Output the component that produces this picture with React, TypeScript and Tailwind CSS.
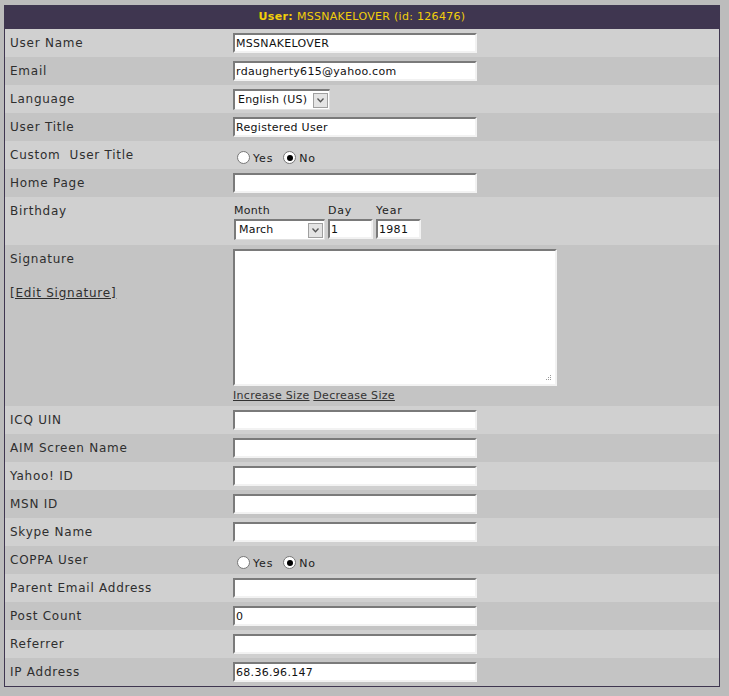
import React from 'react';

const font = { fontFamily: '"DejaVu Sans", Verdana, sans-serif' };

type Row = {
  label: string;
  kind: 'text' | 'select' | 'radio' | 'birthday' | 'signature';
  value?: string;
};

const rows: Row[] = [
  { label: 'User Name', kind: 'text', value: 'MSSNAKELOVER' },
  { label: 'Email', kind: 'text', value: 'rdaugherty615@yahoo.com' },
  { label: 'Language', kind: 'select', value: 'English (US)' },
  { label: 'User Title', kind: 'text', value: 'Registered User' },
  { label: 'Custom  User Title', kind: 'radio' },
  { label: 'Home Page', kind: 'text', value: '' },
  { label: 'Birthday', kind: 'birthday' },
  { label: 'Signature', kind: 'signature' },
  { label: 'ICQ UIN', kind: 'text', value: '' },
  { label: 'AIM Screen Name', kind: 'text', value: '' },
  { label: 'Yahoo! ID', kind: 'text', value: '' },
  { label: 'MSN ID', kind: 'text', value: '' },
  { label: 'Skype Name', kind: 'text', value: '' },
  { label: 'COPPA User', kind: 'radio' },
  { label: 'Parent Email Address', kind: 'text', value: '' },
  { label: 'Post Count', kind: 'text', value: '0' },
  { label: 'Referrer', kind: 'text', value: '' },
  { label: 'IP Address', kind: 'text', value: '68.36.96.147' },
];

// Old-style inset text box
const TextBox = ({ value, w }: { value: string; w: string }) => (
  <div
    className={`${w} h-[20px] bg-white border-t-2 border-l-2 border-t-[#7a7a7a] border-l-[#7a7a7a] border-b-2 border-r-2 border-b-[#f2f2f2] border-r-[#f2f2f2] flex items-center pl-[1px] pt-[1px] text-[11px] text-[#111] tracking-[0.3px] leading-none overflow-hidden whitespace-nowrap`}
  >
    {value}
  </div>
);

const Arrow = () => (
  <div className="w-[15px] h-[15px] bg-[#e4e4e4] border border-[#a0a0a0] flex items-center justify-center mr-[1px]">
    <svg width="7" height="5" viewBox="0 0 7 5">
      <path d="M0.5 0.5 L3.5 3.8 L6.5 0.5" fill="none" stroke="#555" strokeWidth="1.3" />
    </svg>
  </div>
);

const SelectBox = ({ value, w }: { value: string; w: string }) => (
  <div
    className={`${w} h-[21px] bg-white border-t-2 border-l-2 border-t-[#7a7a7a] border-l-[#7a7a7a] border-b border-r border-b-[#e0e0e0] border-r-[#e0e0e0] flex items-center justify-between pl-[3px] text-[11px] text-[#111] tracking-[0.2px]`}
  >
    <span>{value}</span>
    <Arrow />
  </div>
);

const Radio = ({ checked, label }: { checked: boolean; label: string }) => (
  <div className="flex items-center gap-[3px] mr-[10px]">
    <div className="w-[13px] h-[13px] rounded-full bg-white border border-[#777] flex items-center justify-center">
      {checked && <div className="w-[6px] h-[6px] rounded-full bg-black" />}
    </div>
    <span className="text-[11px] text-[#222] mt-[3px] tracking-[0.8px]">{label}</span>
  </div>
);

const Control = ({ row }: { row: Row }) => {
  switch (row.kind) {
    case 'text':
      return <TextBox value={row.value || ''} w="w-[244px]" />;
    case 'select':
      return <SelectBox value={row.value || ''} w="w-[97px]" />;
    case 'radio':
      return (
        <div className="flex items-center mt-[3px] ml-[4px]">
          <Radio checked={false} label="Yes" />
          <Radio checked={true} label="No" />
        </div>
      );
    case 'birthday':
      return (
        <div className="flex gap-[3px] mt-[3px] ml-[1px]">
          <div className="flex flex-col">
            <span className="text-[11px] text-[#222] leading-[13px] mb-[2px] tracking-[0.3px]">Month</span>
            <SelectBox value="March" w="w-[91px]" />
          </div>
          <div className="flex flex-col">
            <span className="text-[11px] text-[#222] leading-[13px] mb-[2px] tracking-[0.8px]">Day</span>
            <TextBox value="1" w="w-[45px]" />
          </div>
          <div className="flex flex-col">
            <span className="text-[11px] text-[#222] leading-[13px] mb-[2px] tracking-[0.8px]">Year</span>
            <TextBox value="1981" w="w-[45px]" />
          </div>
        </div>
      );
    case 'signature':
      return (
        <div className="flex flex-col">
          <div className="relative w-[324px] h-[137px] bg-white border-t-2 border-l-2 border-t-[#7a7a7a] border-l-[#7a7a7a] border-b-2 border-r-2 border-b-[#f2f2f2] border-r-[#f2f2f2]">
            <svg className="absolute right-[3px] bottom-[3px]" width="7" height="7" viewBox="0 0 7 7">
              <rect x="5" y="1" width="1" height="1" fill="#999" />
              <rect x="3" y="3" width="1" height="1" fill="#999" />
              <rect x="5" y="3" width="1" height="1" fill="#999" />
              <rect x="1" y="5" width="1" height="1" fill="#999" />
              <rect x="3" y="5" width="1" height="1" fill="#999" />
              <rect x="5" y="5" width="1" height="1" fill="#999" />
            </svg>
          </div>
          <div className="text-[11px] text-[#333] mt-[2px] tracking-[0.3px]">
            <span className="underline">Increase Size</span>{' '}
            <span className="underline">Decrease Size</span>
          </div>
        </div>
      );
  }
};

const rowHeight = (kind: Row['kind']) => {
  if (kind === 'birthday') return 'h-[48px]';
  if (kind === 'signature') return 'h-[161px]';
  return 'h-[28px]';
};

export default function App() {
  return (
    <div className="w-[729px] h-[696px] bg-[#bcbcbc] pt-[5px] pl-[4px]" style={font}>
      <div className="w-[716px] border border-[#3f3650] bg-[#d0d0d0]">
        <div className="h-[23px] bg-[#3f3650] flex items-center justify-center text-[11px] text-[#f2cf0a] tracking-[0.3px]">
          <span className="font-bold mr-[4px]">User:</span>
          <span>MSSNAKELOVER (id: 126476)</span>
        </div>
        {rows.map((row, i) => (
          <div
            key={row.label}
            className={`flex ${rowHeight(row.kind)} ${i % 2 === 0 ? 'bg-[#d0d0d0]' : 'bg-[#c4c4c4]'}`}
          >
            <div className="w-[228px] pl-[5px] pt-[5px] text-[12px] text-[#2e2e2e] tracking-[0.75px] whitespace-pre">
              <div>{row.label}</div>
              {row.kind === 'signature' && (
                <div className="mt-[16px] underline">[Edit Signature]</div>
              )}
            </div>
            <div className="pt-[4px]">
              <Control row={row} />
            </div>
          </div>
        ))}
      </div>
    </div>
  );
}
